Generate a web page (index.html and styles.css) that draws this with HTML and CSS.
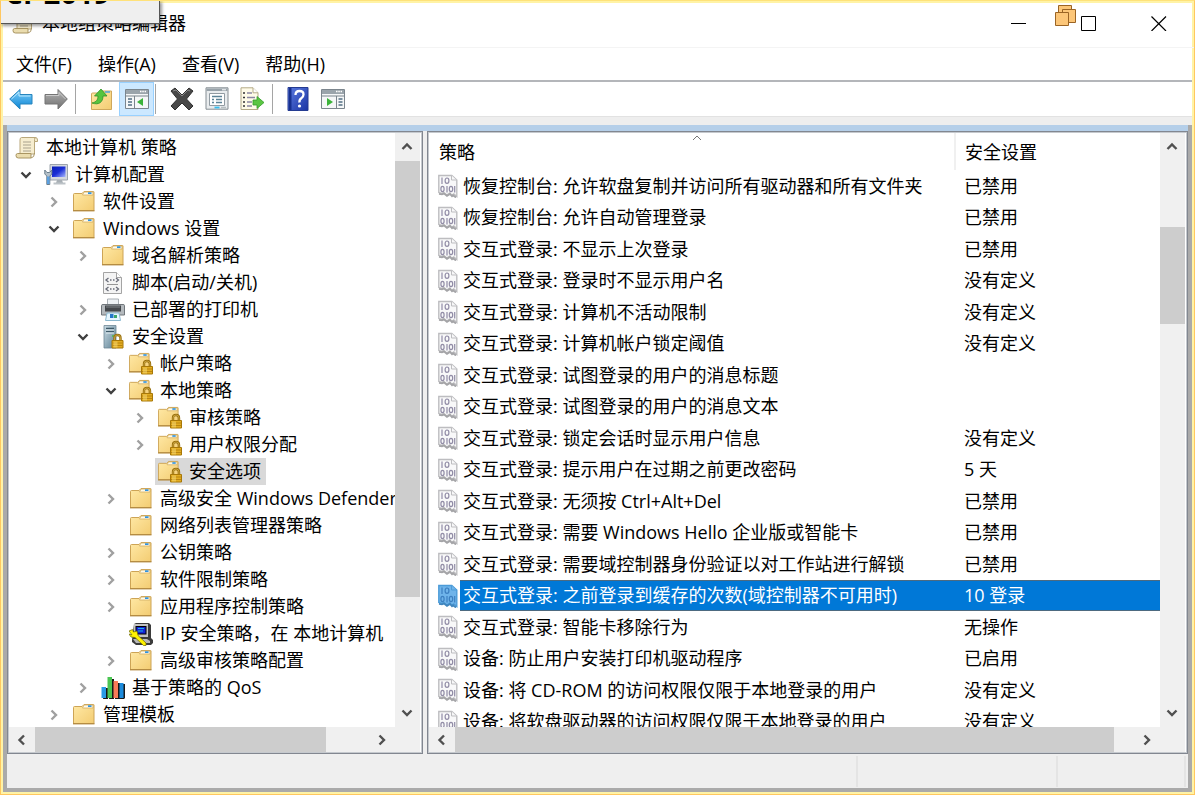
FILE: index.html
```html
<!DOCTYPE html>
<html lang="zh-CN">
<head>
<meta charset="utf-8">
<title>本地组策略编辑器</title>
<link rel="stylesheet" href="styles.css">
</head>
<body>
<svg class="sprite" aria-hidden="true">
  <defs>
    <linearGradient id="gFolder" x1="0" y1="0" x2="1" y2="1"><stop offset="0" stop-color="#ffe9a6"/><stop offset="1" stop-color="#f3cc72"/></linearGradient>
    <linearGradient id="gBlue" x1="0" y1="0" x2="0" y2="1"><stop offset="0" stop-color="#7fd0fa"/><stop offset="1" stop-color="#0b84d4"/></linearGradient>
    <linearGradient id="gGray" x1="0" y1="0" x2="0" y2="1"><stop offset="0" stop-color="#b5b5b5"/><stop offset="1" stop-color="#6f6f6f"/></linearGradient>
    <linearGradient id="gScreen" x1="0" y1="0" x2="1" y2="1"><stop offset="0" stop-color="#0a1fb4"/><stop offset=".5" stop-color="#1b2fd6"/><stop offset="1" stop-color="#a9b8ff"/></linearGradient>
    <linearGradient id="gHelp" x1="0" y1="0" x2="1" y2="1"><stop offset="0" stop-color="#5b7be0"/><stop offset="1" stop-color="#1b35a4"/></linearGradient>
    <linearGradient id="gServer" x1="0" y1="0" x2="1" y2="1"><stop offset="0" stop-color="#c9dbe4"/><stop offset="1" stop-color="#5c7f92"/></linearGradient>
  </defs>
  <symbol id="folder" viewBox="0 0 24 24">
    <path d="M1.500 20.500V4.500q0-1 1-1h7.500l2-2h9.500q.5 0 .5.500V20.500z" fill="url(#gFolder)" stroke="#cda456"/>
    <path d="M12 2h9v3H10.500z" fill="#fffbea" stroke="#d0ac62" stroke-width=".8"/>
    <path d="M16 2.300h3.500v1.700H16z" fill="#2f93e0"/>
    <path d="M1 20.700h21.500" stroke="#b58c42" stroke-width="1.400"/>
  </symbol>
  <symbol id="lock" viewBox="0 0 12 16">
    <path d="M3 8V5q0-3 3-3t3 3v3" fill="none" stroke="#98700f" stroke-width="2.400"/>
    <path d="M3 8V5q0-3 3-3t3 3v3" fill="none" stroke="#d0aa45" stroke-width=".8"/>
    <path d="M.5 7.500h11v7.500H.5z" fill="#e3ad22" stroke="#a87808"/>
    <path d="M1 10h10M1 12.500h10" stroke="#b98510"/>
    <path d="M2 8.500h4v6H2z" fill="#fbe07a" opacity=".5"/>
  </symbol>
  <symbol id="lockfolder" viewBox="0 0 24 24">
    <use href="#folder" x="-1" y="0" width="23" height="23"/>
    <use href="#lock" x="11" y="7" width="14" height="16"/>
  </symbol>
  <symbol id="server" viewBox="0 0 24 24">
    <path d="M3 .5h12v22.500H3z" fill="url(#gServer)" stroke="#6d8795" stroke-width=".8"/>
    <path d="M5 3.500h8M5 6.500h8" stroke="#3e5a69" stroke-width="1.500"/><path d="M5 5h8M5 8h8" stroke="#e4eff4"/>
    <path d="M11 11h2" stroke="#4dbd4c" stroke-width="1.500"/>
    <use href="#lock" x="10" y="8" width="13" height="16"/>
  </symbol>
  <symbol id="scroll" viewBox="0 0 24 24">
    <path d="M6.500 1.500h14q2 0 2 2.500v1.500h-3V18H5V4Q5 1.500 6.500 1.500z" fill="#f6edcf" stroke="#b9a77a"/>
    <path d="M19.500 5.500V3.500q0-2 1.500-2" fill="none" stroke="#b9a77a"/>
    <path d="M2.500 17.500H16v4.500H3.500Q1 22 1 19.700t1.500-2.200z" fill="#eadcae" stroke="#a99562"/>
    <path d="M16 22q3.500-.5 3.500-5" fill="none" stroke="#a99562"/>
    <path d="M8 6h8M8 9h8M8 12h8M8 15h8" stroke="#a8a18d" stroke-width="1.200"/>
  </symbol>
  <symbol id="computer" viewBox="0 0 24 24">
    <path d="M6 1.500h17.500V17H6z" fill="#d5d9de" stroke="#9da4ac"/>
    <path d="M8 3.500h13.500v10.500H8z" fill="url(#gScreen)"/>
    <path d="M13 17h5l1 3h-7z" fill="#a8afb5"/><path d="M9.500 20.500h12" stroke="#bcc2c7" stroke-width="2"/>
    <path d="M.8 7v4l2 2v8.500h3V13l2-2V7l-2.200 2.500H3z" fill="#b5c1ca" stroke="#6b7f8d"/>
    <path d="M3 13.500h2.500V21H3z" fill="#5a9fe0"/>
  </symbol>
  <symbol id="script" viewBox="0 0 24 24">
    <path d="M2.500 1.500h13l5 5V22.500h-18z" fill="#f4f4f4" stroke="#a4a4a4"/><path d="M15.500 1.500v5h5" fill="#fff" stroke="#a4a4a4"/>
    <path d="M7.500 7L5 9l2.500 2M15 7l2.500 2L15 11M9 9h1.500M12 9h1.500M7.500 16L5 18l2.500 2M15 16l2.500 2L15 20M9 18h1.500M12 18h1.500" fill="none" stroke="#696c78" stroke-width="1.300"/><path d="M6 13.500h11" stroke="#969696"/>
  </symbol>
  <symbol id="printer" viewBox="0 0 24 24">
    <path d="M6.500 1h11v7h-11z" fill="#edf1f4" stroke="#aab0b5"/>
    <path d="M.5 7.500q0-1 1.500-1h20q1.500 0 1.500 1v9.500H.5z" fill="#b4b9bd" stroke="#70767b"/>
    <path d="M4 7.500h16v6H4z" fill="#43474b"/><path d="M5 9h14" stroke="#7f8488"/>
    <path d="M6 15h12l1.500 7.500h-15z" fill="#e6f6ff" stroke="#8bb8cf"/>
    <path d="M9 16h3.500v4H9z" fill="#2477c9"/><path d="M13 17h3v3h-3z" fill="#3ba66b"/>
  </symbol>
  <symbol id="ipsec" viewBox="0 0 24 24">
    <path d="M5 2l2-1h13l2 2v13l2 2v3l-2 2H7l-4-3v-2z" fill="#3c3c3c"/>
    <path d="M5 2h14v13H5z" fill="#c3c3c3"/><path d="M6.500 4h11v8.500h-11z" fill="#000"/><path d="M7.500 5h9v6.500h-9z" fill="#1324d6"/><path d="M9 6.500h6M9 9h5" stroke="#1bb5e8"/>
    <path d="M4 17h14l3 2v2H7z" fill="#b8b8b8"/>
    <path d="M0 9l3.500-1.500 1 2.500L8 9l1 4.500 8 7.500v2.500h-2.500L6 15.500 2 15l-2-3 3 1z" fill="#fff200" stroke="#6d6900" stroke-width=".7"/>
  </symbol>
  <symbol id="qos" viewBox="0 0 24 24">
    <path d="M4 12h3v11H2zM9 3h4v20H8zM15 7h4v16h-5zM20 8h4v14l-1 1h-4z" fill="#181818"/>
    <path d="M.5 11h4.500v11H.5z" fill="#2a9be6"/><path d="M6.500 1h4.500v21H6.500z" fill="#4bc553"/><path d="M12.500 5h4.500v17h-4.500z" fill="#fa7c58"/><path d="M18.500 7h4v15h-4z" fill="#1c8bdc"/>
  </symbol>
  <symbol id="policy" viewBox="0 0 20 24">
    <path class="paper" d="M.8 1.500h13l5 4.500v16.500l-3-2.500-2 1.500-2-2.500-3 2-3-2.500-2 1-3-1z" stroke-width="1.400"/>
    <path class="paper" d="M13.500 1.500V6h5"/>
    <g class="bits">
      <path d="M4 3.500v6.500M9 12v6.500"/>
      <ellipse cx="9" cy="6.700" rx="1.900" ry="2.700"/>
      <ellipse cx="4.500" cy="15" rx="1.600" ry="2.700"/>
      <ellipse cx="13" cy="15" rx="1.700" ry="2.700"/>
      <path d="M16.700 12v6.500"/>
    </g>
    <path class="edge" d="M1 19.800l3 .5 2-.8 3 2.300 3-1.800 2 2.300 1-1 3 2.200"/>
  </symbol>
  <symbol id="down" viewBox="0 0 12 12"><path d="M1.500 3.500L6 8l4.500-4.500" fill="none" stroke="currentColor" stroke-width="2.400"/></symbol>
  <symbol id="right" viewBox="0 0 12 12"><path d="M3.500 1.500L8 6l-4.500 4.500" fill="none" stroke="currentColor" stroke-width="2.400"/></symbol>
  <symbol id="left" viewBox="0 0 12 12"><path d="M8 1.500L3.500 6 8 10.500" fill="none" stroke="currentColor" stroke-width="2.400"/></symbol>
  <symbol id="up" viewBox="0 0 12 12"><path d="M1.500 8L6 3.500 10.500 8" fill="none" stroke="currentColor" stroke-width="2.400"/></symbol>
  <symbol id="thin-up" viewBox="0 0 10 10"><path d="M1 7l4-4 4 4" fill="none" stroke="currentColor"/></symbol>
</svg>

<div class="window">
  <header class="titlebar">
    <svg class="icon"><use href="#scroll"/></svg>
    <h1 class="title">本地组策略编辑器</h1>
    <button class="caption minimize" aria-label="最小化"><svg viewBox="0 0 16 16"><path d="M0 8.500h15" stroke="#000"/></svg></button>
    <button class="caption maximize" aria-label="最大化"><svg viewBox="0 0 16 16"><path d="M.5 1.500h14v14H.5z" fill="none" stroke="#000"/></svg></button>
    <button class="caption close" aria-label="关闭"><svg viewBox="0 0 16 16"><path d="M.5 1.500l14.500 14.500M15 1.500L.5 16" stroke="#000" stroke-width="1.200"/></svg></button>
    <svg class="stack" viewBox="0 0 22 22"><g fill="#fcc678" stroke="#9b6424"><path d="M3.500.5h13v13h-13z"/><path d="M7.500 4.500h13v13h-13z"/><path d="M.5 7.500h13v13H.5z"/></g></svg>
  </header>
  <div class="tip">er 2019</div>

  <nav class="menubar">
    <button>文件(F)</button><button>操作(A)</button><button>查看(V)</button><button>帮助(H)</button>
  </nav>

  <div class="toolbar">
    <button class="tool" aria-label="后退"><svg viewBox="0 0 24 24"><path d="M.7 12L11 2.500V7.500h12v9.500H11v5z" fill="url(#gBlue)" stroke="#2784bd"/><path d="M2.500 12l7.500-7v4h11.500" fill="none" stroke="#b9e8ff"/></svg></button>
    <button class="tool" aria-label="前进"><svg viewBox="0 0 24 24"><path d="M23.300 12L14 2.500V7.500H1v9.500h13v5z" fill="url(#gGray)" stroke="#747474"/><path d="M2 8.500h13v-3l6.500 6.500" fill="none" stroke="#cacaca"/></svg></button>
    <span class="sep first-sep"></span>
    <button class="tool" aria-label="上移一级"><svg viewBox="0 0 24 24"><path d="M1.500 22.500V7q0-1 1-1h7l2-2h10v18.500z" fill="url(#gFolder)" stroke="#cfa85c"/><path d="M15 5h5" stroke="#4aa3e0" stroke-width="1.500"/><path d="M2 16c5-1 6-4 6-7H4.500L11 2l6 7h-4c0 6-4 9.500-11 7z" fill="#55c43e" stroke="#2d9226" stroke-width=".8"/></svg></button>
    <button class="tool active" aria-label="显示控制台树" aria-pressed="true"><svg viewBox="0 0 24 24"><path d="M.5 2.500h23v19H.5z" fill="#f5f7f8" stroke="#7b858d"/><path d="M1 3h22v4H1z" fill="#9aa4ab"/><path d="M15 4.500h6" stroke="#fff" stroke-width="1.500" stroke-dasharray="1.500 .8"/><path d="M1 9h22" stroke="#7b858d"/><path d="M9.500 9v12" stroke="#7b858d"/><path d="M3 12h4M3 15h4M3 18h4" stroke="#526f83" stroke-width="1.600"/><path d="M18 11v8l-6-4z" fill="#3bb33a"/></svg></button>
    <span class="sep near"></span>
    <button class="tool" aria-label="删除"><svg viewBox="0 0 24 24"><path d="M1 4l4-3 7 7 7-7 4 3-6.500 8 6.500 7-4 4-7-7-7 7-4-4 6.500-7z" fill="#484848" stroke="#303030"/><path d="M3 4l3-1 6 6 6-6 2 1" fill="none" stroke="#898989"/></svg></button>
    <button class="tool" aria-label="属性"><svg viewBox="0 0 24 24"><path d="M1 .8h22v21.400H1z" fill="#e9ecee" stroke="#858d93"/><path d="M1.500 1.500h21V4h-21z" fill="#98a2a9"/><path d="M17 2.800h4" stroke="#fff"/><path d="M4.500 6.500h15v12h-15z" fill="#fff" stroke="#929ba2"/><path d="M7 9.500h10M11 12.500h6M11 15.500h6M7 12.500h2M7 15.500h2" stroke="#5c8296" stroke-width="1.300"/><path d="M9.500 20.500h5" stroke="#34bdf0" stroke-width="1.800"/><path d="M16 20.500h5" stroke="#b7bec2" stroke-width="1.500"/></svg></button>
    <button class="tool" aria-label="导出列表"><svg viewBox="0 0 24 24"><path d="M1 .8h12l5 5V22.500H1z" fill="#fffbe8" stroke="#b4aa87"/><path d="M13 .8v5h5" fill="#fff" stroke="#b4aa87"/><path d="M3 6h2M3 10.500h2M3 15h2M3 19h2" stroke="#333" stroke-width="1.600"/><path d="M7 6h5M7 10.500h8M7 15h5M7 19h5" stroke="#8c87a3" stroke-width="1.500"/><path d="M13 13h4V9.500l7 6-7 6V18h-4z" fill="#5bc642" stroke="#319d28" stroke-width=".8"/></svg></button>
    <span class="sep"></span>
    <button class="tool" aria-label="帮助"><svg viewBox="0 0 24 24"><path d="M2 .5h20v23H2z" fill="url(#gHelp)" stroke="#243b91"/><path d="M3 1h2.500v22H3z" fill="#17308f"/><path d="M9.500 8q0-4 4-4t4 3.500q0 2.300-2.200 3.700t-1.800 4.300" fill="none" stroke="#fff" stroke-width="2.300"/><circle cx="13.500" cy="19" r="1.600" fill="#fff"/></svg></button>
    <button class="tool" aria-label="显示操作窗格"><svg viewBox="0 0 24 24"><path d="M.5 2.500h23v19H.5z" fill="#f5f7f8" stroke="#7b858d"/><path d="M1 3h22v4H1z" fill="#9aa4ab"/><path d="M15 4.500h6" stroke="#fff" stroke-width="1.500" stroke-dasharray="1.500 .8"/><path d="M1 9h22" stroke="#7b858d"/><path d="M15.500 9v12" stroke="#7b858d"/><path d="M17.500 12h4M17.500 15h4M17.500 18h4" stroke="#526f83" stroke-width="1.600"/><path d="M6 11v8l6-4z" fill="#3bb33a"/></svg></button>
  </div>
  <div class="strip"></div>

  <div class="frame">
    <main class="panes">
      <section class="pane tree-pane">
        <div class="view">
          <ul class="tree">
            <li class="root"><span class="label"><svg class="icon"><use href="#scroll"/></svg>本地计算机 策略</span></li>
            <li class="l1"><button class="toggle open" aria-label="折叠"><svg><use href="#down"/></svg></button><span class="label"><svg class="icon"><use href="#computer"/></svg>计算机配置</span></li>
            <li class="l2"><button class="toggle" aria-label="展开"><svg><use href="#right"/></svg></button><span class="label"><svg class="icon"><use href="#folder"/></svg>软件设置</span></li>
            <li class="l2"><button class="toggle open" aria-label="折叠"><svg><use href="#down"/></svg></button><span class="label"><svg class="icon"><use href="#folder"/></svg>Windows 设置</span></li>
            <li class="l3"><button class="toggle" aria-label="展开"><svg><use href="#right"/></svg></button><span class="label"><svg class="icon"><use href="#folder"/></svg>域名解析策略</span></li>
            <li class="l3"><span class="toggle"></span><span class="label"><svg class="icon"><use href="#script"/></svg>脚本(启动/关机)</span></li>
            <li class="l3"><button class="toggle" aria-label="展开"><svg><use href="#right"/></svg></button><span class="label"><svg class="icon"><use href="#printer"/></svg>已部署的打印机</span></li>
            <li class="l3"><button class="toggle open" aria-label="折叠"><svg><use href="#down"/></svg></button><span class="label"><svg class="icon"><use href="#server"/></svg>安全设置</span></li>
            <li class="l4"><button class="toggle" aria-label="展开"><svg><use href="#right"/></svg></button><span class="label"><svg class="icon"><use href="#lockfolder"/></svg>帐户策略</span></li>
            <li class="l4"><button class="toggle open" aria-label="折叠"><svg><use href="#down"/></svg></button><span class="label"><svg class="icon"><use href="#lockfolder"/></svg>本地策略</span></li>
            <li class="l5"><button class="toggle" aria-label="展开"><svg><use href="#right"/></svg></button><span class="label"><svg class="icon"><use href="#lockfolder"/></svg>审核策略</span></li>
            <li class="l5"><button class="toggle" aria-label="展开"><svg><use href="#right"/></svg></button><span class="label"><svg class="icon"><use href="#lockfolder"/></svg>用户权限分配</span></li>
            <li class="l5"><span class="toggle"></span><span class="label current"><svg class="icon"><use href="#lockfolder"/></svg>安全选项</span></li>
            <li class="l4"><button class="toggle" aria-label="展开"><svg><use href="#right"/></svg></button><span class="label"><svg class="icon"><use href="#folder"/></svg>高级安全 Windows Defender</span></li>
            <li class="l4"><span class="toggle"></span><span class="label"><svg class="icon"><use href="#folder"/></svg>网络列表管理器策略</span></li>
            <li class="l4"><button class="toggle" aria-label="展开"><svg><use href="#right"/></svg></button><span class="label"><svg class="icon"><use href="#folder"/></svg>公钥策略</span></li>
            <li class="l4"><button class="toggle" aria-label="展开"><svg><use href="#right"/></svg></button><span class="label"><svg class="icon"><use href="#folder"/></svg>软件限制策略</span></li>
            <li class="l4"><button class="toggle" aria-label="展开"><svg><use href="#right"/></svg></button><span class="label"><svg class="icon"><use href="#folder"/></svg>应用程序控制策略</span></li>
            <li class="l4"><span class="toggle"></span><span class="label"><svg class="icon"><use href="#ipsec"/></svg>IP 安全策略，在 本地计算机</span></li>
            <li class="l4"><button class="toggle" aria-label="展开"><svg><use href="#right"/></svg></button><span class="label"><svg class="icon"><use href="#folder"/></svg>高级审核策略配置</span></li>
            <li class="l3"><button class="toggle" aria-label="展开"><svg><use href="#right"/></svg></button><span class="label"><svg class="icon"><use href="#qos"/></svg>基于策略的 QoS</span></li>
            <li class="l2"><button class="toggle" aria-label="展开"><svg><use href="#right"/></svg></button><span class="label"><svg class="icon"><use href="#folder"/></svg>管理模板</span></li>
          </ul>
        </div>
        <div class="vbar">
          <button aria-label="向上滚动"><svg><use href="#up"/></svg></button>
          <div class="vtrack"><span class="thumb tree-v"></span></div>
          <button aria-label="向下滚动"><svg><use href="#down"/></svg></button>
        </div>
        <div class="hbar">
          <button aria-label="向左滚动"><svg><use href="#left"/></svg></button>
          <div class="htrack"><span class="thumb tree-h"></span></div>
          <button aria-label="向右滚动"><svg><use href="#right"/></svg></button>
        </div>
        <div class="corner"></div>
      </section>

      <section class="pane list-pane">
        <div class="view">
          <table class="list">
            <colgroup><col class="col-name"><col></colgroup>
            <thead><tr><th>策略<svg class="sort"><use href="#thin-up"/></svg></th><th>安全设置</th></tr></thead>
            <tbody>
              <tr><td><div class="cell"><svg class="doc"><use href="#policy"/></svg><span>恢复控制台: 允许软盘复制并访问所有驱动器和所有文件夹</span></div></td><td>已禁用</td></tr>
              <tr><td><div class="cell"><svg class="doc"><use href="#policy"/></svg><span>恢复控制台: 允许自动管理登录</span></div></td><td>已禁用</td></tr>
              <tr><td><div class="cell"><svg class="doc"><use href="#policy"/></svg><span>交互式登录: 不显示上次登录</span></div></td><td>已禁用</td></tr>
              <tr><td><div class="cell"><svg class="doc"><use href="#policy"/></svg><span>交互式登录: 登录时不显示用户名</span></div></td><td>没有定义</td></tr>
              <tr><td><div class="cell"><svg class="doc"><use href="#policy"/></svg><span>交互式登录: 计算机不活动限制</span></div></td><td>没有定义</td></tr>
              <tr><td><div class="cell"><svg class="doc"><use href="#policy"/></svg><span>交互式登录: 计算机帐户锁定阈值</span></div></td><td>没有定义</td></tr>
              <tr><td><div class="cell"><svg class="doc"><use href="#policy"/></svg><span>交互式登录: 试图登录的用户的消息标题</span></div></td><td></td></tr>
              <tr><td><div class="cell"><svg class="doc"><use href="#policy"/></svg><span>交互式登录: 试图登录的用户的消息文本</span></div></td><td></td></tr>
              <tr><td><div class="cell"><svg class="doc"><use href="#policy"/></svg><span>交互式登录: 锁定会话时显示用户信息</span></div></td><td>没有定义</td></tr>
              <tr><td><div class="cell"><svg class="doc"><use href="#policy"/></svg><span>交互式登录: 提示用户在过期之前更改密码</span></div></td><td>5 天</td></tr>
              <tr><td><div class="cell"><svg class="doc"><use href="#policy"/></svg><span>交互式登录: 无须按 Ctrl+Alt+Del</span></div></td><td>已禁用</td></tr>
              <tr><td><div class="cell"><svg class="doc"><use href="#policy"/></svg><span>交互式登录: 需要 Windows Hello 企业版或智能卡</span></div></td><td>已禁用</td></tr>
              <tr><td><div class="cell"><svg class="doc"><use href="#policy"/></svg><span>交互式登录: 需要域控制器身份验证以对工作站进行解锁</span></div></td><td>已禁用</td></tr>
              <tr class="selected"><td><div class="cell"><svg class="doc"><use href="#policy"/></svg><span>交互式登录: 之前登录到缓存的次数(域控制器不可用时)</span></div></td><td>10 登录</td></tr>
              <tr><td><div class="cell"><svg class="doc"><use href="#policy"/></svg><span>交互式登录: 智能卡移除行为</span></div></td><td>无操作</td></tr>
              <tr><td><div class="cell"><svg class="doc"><use href="#policy"/></svg><span>设备: 防止用户安装打印机驱动程序</span></div></td><td>已启用</td></tr>
              <tr><td><div class="cell"><svg class="doc"><use href="#policy"/></svg><span>设备: 将 CD-ROM 的访问权限仅限于本地登录的用户</span></div></td><td>没有定义</td></tr>
              <tr><td><div class="cell"><svg class="doc"><use href="#policy"/></svg><span>设备: 将软盘驱动器的访问权限仅限于本地登录的用户</span></div></td><td>没有定义</td></tr>
            </tbody>
          </table>
        </div>
        <div class="vbar">
          <button aria-label="向上滚动"><svg><use href="#up"/></svg></button>
          <div class="vtrack"><span class="thumb list-v"></span></div>
          <button aria-label="向下滚动"><svg><use href="#down"/></svg></button>
        </div>
        <div class="hbar">
          <button aria-label="向左滚动"><svg><use href="#left"/></svg></button>
          <div class="htrack"><span class="thumb list-h"></span></div>
          <button aria-label="向右滚动"><svg><use href="#right"/></svg></button>
        </div>
        <div class="corner"></div>
      </section>
    </main>
    <footer class="status"><span class="part first"></span><span class="part second"></span><span class="part third"></span></footer>
  </div>
</div>
</body>
</html>
```
FILE: styles.css
```css
* { box-sizing: border-box; }

body {
  margin: 0;
  font: 18px/27px "Open Sans", "Noto Sans CJK SC", sans-serif;
  color: #000;
}

button {
  margin: 0;
  padding: 0;
  border: 0;
  background: none;
  font: inherit;
  color: inherit;
}

svg { display: block; }
.sprite { position: absolute; width: 0; height: 0; }
.icon { width: 24px; height: 24px; flex: none; }

.window {
  position: relative;
  display: flex;
  flex-direction: column;
  height: 100vh;
  overflow: hidden;
  background: #fff;
  border: 1px solid #ffc75f;
  border-top-color: #ffe27a;
  box-shadow: inset 0 0 0 2px #fff3a6;
}

/* Title bar */
.titlebar {
  position: relative;
  display: flex;
  align-items: center;
  height: 46px;
  flex: none;
  padding: 0 0 3px 9px;
  margin: 1px 0 0 2px;
  border-bottom: 1px solid #f4f4f4;
}
.title { flex: 1; margin: 0 0 0 6px; font-size: 18px; font-weight: 400; line-height: 24px; }
.caption { display: grid; place-items: center; width: 70px; height: 42px; }
.caption svg { width: 16px; height: 16px; }
.stack { position: absolute; top: 3px; right: 117px; width: 22px; height: 22px; }

.tip {
  position: absolute;
  top: -1px;
  left: -1px;
  display: flex;
  align-items: flex-end;
  width: 160px;
  height: 24px;
  padding: 0 0 17px 6px;
  overflow: hidden;
  background: #efefef;
  border-right: 1px solid #555;
  border-bottom: 1px solid #555;
  box-shadow: 2px 2px 3px #0006;
  font-size: 29px;
  font-weight: 700;
}

/* Menu and toolbar */
.menubar {
  display: flex;
  gap: 26px;
  height: 34px;
  flex: none;
  margin: 0 2px;
  padding-left: 13px;
  border-bottom: 2px solid #b4b6ba;
}
.toolbar {
  display: flex;
  align-items: center;
  height: 34px;
  flex: none;
  margin: 0 2px;
}
.tool { display: grid; place-items: center; width: 35px; height: 34px; }
.tool svg { width: 24px; height: 24px; }
.active { background: #cce8ff; border: 1px solid #99d1ff; }
.sep { width: 1px; height: 30px; background: #a5a5a5; margin: 0 7px 0 3px; }
.first-sep { margin: 0 8px 0 2px; }
.near { margin: 0 8px 0 1px; }
.strip { height: 9px; flex: none; margin: 0 2px; background: #eee; border-top: 1px solid #e2e2e2; }

/* Content frame */
.frame {
  display: flex;
  flex-direction: column;
  flex: 1;
  min-height: 0;
  margin: 0 2px 2px;
  border: 4px solid #aaa;
  border-top: 0;
  background: #efefef;
}
.panes {
  display: grid;
  grid-template-columns: 416px 1fr;
  gap: 4px;
  flex: 1;
  min-height: 0;
  border-top: 6px solid #b5cfe9;
}
.pane {
  display: grid;
  grid-template-columns: 1fr 25px;
  grid-template-rows: 1fr 25px;
  min-width: 0;
  min-height: 0;
  padding: 1px 2px 1px 1px;
  border: 1px solid #828790;
  box-shadow: inset 0 0 0 1px #c5c9ce;
  background: #fff;
}
.view { overflow: hidden; min-width: 0; min-height: 0; }

/* Tree */
.tree { margin: 0; padding: 1px 0 0 1px; list-style: none; }
.tree li { display: flex; height: 27px; white-space: nowrap; }
.label { display: flex; align-items: center; gap: 7px; padding: 0 5px 0 3px; }
.current { background: #d9d9d9; }
.toggle { display: grid; place-items: center; width: 31px; height: 27px; flex: none; color: #a0a0a0; }
.toggle svg { width: 12px; height: 12px; }
.open { color: #404040; }
.root { padding-left: 2px; }
.l2 { padding-left: 28px; }
.l3 { padding-left: 57px; }
.l4 { padding-left: 85px; }
.l5 { padding-left: 114px; }

/* Policy list */
.list { width: 100%; table-layout: fixed; border-collapse: collapse; white-space: nowrap; }
.col-name { width: 526px; }
.list th { position: relative; height: 37px; padding: 2px 0 0 9px; text-align: left; font-weight: 400; }
.list th:first-child { padding-left: 10px; border-right: 2px solid #f0f0f0; }
.sort { position: absolute; top: 0; left: 50%; width: 10px; height: 10px; color: #777; }
.list td { height: 31px; padding: 0 0 0 9px; line-height: 31px; }
.list tbody tr:nth-child(odd) td { height: 32px; line-height: 32px; }
.cell { display: flex; align-items: center; }
.doc { width: 20px; height: 24px; flex: none; margin-right: 2px; }
.cell span { flex: 1; padding-left: 3px; }
.paper { fill: var(--paper, #f8f8f9); stroke: var(--rim, #bdbdc0); }
.bits { fill: none; stroke: var(--bits, #918ca6); stroke-width: 1.2px; }
.edge { fill: none; stroke: var(--edge, #a4a4a7); stroke-width: 1.8px; }
.selected { color: #fff; --paper: #6fb4ea; --rim: #4c9bd8; --bits: #3c7fc0; --edge: #3f85bd; }
.selected .cell span, .selected td + td { background: #0078d7; box-shadow: inset 0 1px #4d6a80, inset 0 -1px #4d6a80; }

/* Scroll bars */
.vbar, .hbar, .corner { background: #f0f0f0; color: #505050; }
.vbar, .hbar { display: flex; }
.vbar { flex-direction: column; }
.vbar button, .hbar button { display: grid; place-items: center; flex: none; }
.vbar button { width: 23px; height: 28px; }
.hbar button { width: 26px; height: 25px; }
.vbar svg, .hbar svg { width: 12px; height: 12px; }
.vtrack, .htrack { display: flex; flex: 1; min-width: 0; min-height: 0; }
.vtrack { flex-direction: column; }
.thumb { display: block; background: #cdcdcd; }
.tree-v { height: 81%; }
.tree-h { width: 87%; }
.list-v { height: 18%; margin-top: 66px; }
.list-h { width: 97%; }

/* Status bar */
.status { display: flex; height: 34px; flex: none; padding: 2px 2px 1px 0; }
.part { border-right: 2px solid #e4e4e4; }
.first { flex: 1; }
.second { width: 200px; }
.third { width: 128px; }
```
